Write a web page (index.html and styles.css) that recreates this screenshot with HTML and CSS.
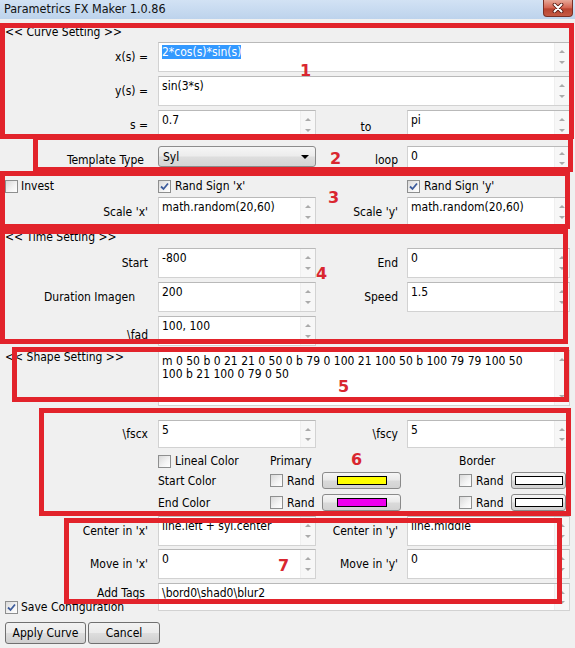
FILE: index.html
```html
<!DOCTYPE html>
<html>
<head>
<meta charset="utf-8">
<title>Parametrics FX Maker 1.0.86</title>
<link rel="stylesheet" href="styles.css">
</head>
<body>
<div class="win">
  <div class="titlebar">
    <span class="title">Parametrics FX Maker 1.0.86</span>
    <div class="close"><svg width="14" height="10" viewBox="0 0 14 10"><path d="M3.5 1.5 L10.5 8.5 M10.5 1.5 L3.5 8.5" stroke="#5a1a12" stroke-width="3.8" stroke-linecap="round"/><path d="M3.5 1.5 L10.5 8.5 M10.5 1.5 L3.5 8.5" stroke="#fff" stroke-width="2" stroke-linecap="round"/></svg></div>
  </div>

  <div class="form">
    <div class="hdr hdr-curve">&lt;&lt; Curve Setting &gt;&gt;</div>

    <div class="row h30 m3">
      <div class="lbl">x(s) =</div>
      <div class="field wide"><div class="txt"><span class="sel">2*cos(s)*sin(s)</span></div><div class="sb"><i class="up"></i><i class="dn"></i></div></div>
    </div>
    <div class="row h30 m4">
      <div class="lbl">y(s) =</div>
      <div class="field wide"><div class="txt">sin(3*s)</div><div class="sb"><i class="up"></i><i class="dn"></i></div></div>
    </div>
    <div class="row h30 m4">
      <div class="lbl">s =</div>
      <div class="field"><div class="txt">0.7</div><div class="sb"><i class="up"></i><i class="dn"></i></div></div>
      <div class="mid-c">to</div>
      <div class="field"><div class="txt">pi</div><div class="sb"><i class="up"></i><i class="dn"></i></div></div>
    </div>

    <div class="row tpl">
      <div class="lbl top tt">Template Type</div>
      <div class="select"><span>Syl</span><span class="arr"></span></div>
      <div class="mlbl top">loop</div>
      <div class="field f24"><div class="txt">0</div><div class="sb"><i class="up"></i><i class="dn"></i></div></div>
    </div>

    <div class="row chkrow">
      <div class="chk inv"><span class="cb"></span><span>Invest</span></div>
      <div class="chk"><span class="cb"><svg width="11" height="11" viewBox="0 0 11 11"><path d="M2 5.5 L4.5 8 L9 2.5" fill="none" stroke="#3d5c9c" stroke-width="1.8"/></svg></span><span>Rand Sign 'x'</span></div>
      <div></div>
      <div class="chk"><span class="cb"><svg width="11" height="11" viewBox="0 0 11 11"><path d="M2 5.5 L4.5 8 L9 2.5" fill="none" stroke="#3d5c9c" stroke-width="1.8"/></svg></span><span>Rand Sign 'y'</span></div>
    </div>
    <div class="row h30 m4">
      <div class="lbl">Scale 'x'</div>
      <div class="field"><div class="txt">math.random(20,60)</div><div class="sb"><i class="up"></i><i class="dn"></i></div></div>
      <div class="mlbl">Scale 'y'</div>
      <div class="field"><div class="txt">math.random(20,60)</div><div class="sb"><i class="up"></i><i class="dn"></i></div></div>
    </div>

    <div class="hdr hdr-time">&lt;&lt; Time Setting &gt;&gt;</div>
    <div class="row h30 m4">
      <div class="lbl">Start</div>
      <div class="field"><div class="txt">-800</div><div class="sb"><i class="up"></i><i class="dn"></i></div></div>
      <div class="mlbl">End</div>
      <div class="field"><div class="txt">0</div><div class="sb"><i class="up"></i><i class="dn"></i></div></div>
    </div>
    <div class="row h30 m4">
      <div class="lbl dur">Duration Imagen</div>
      <div class="field"><div class="txt">200</div><div class="sb"><i class="up"></i><i class="dn"></i></div></div>
      <div class="mlbl">Speed</div>
      <div class="field"><div class="txt">1.5</div><div class="sb"><i class="up"></i><i class="dn"></i></div></div>
    </div>
    <div class="row h30 m4">
      <div class="lbl lowlbl">\fad</div>
      <div class="field"><div class="txt">100, 100</div><div class="sb"><i class="up"></i><i class="dn"></i></div></div>
    </div>

    <div class="row shape m4">
      <div class="hdr shape-hdr">&lt;&lt; Shape Setting &gt;&gt;</div>
      <div class="field wide"><div class="txt multi"><div>m 0 50 b 0 21 21 0 50 0 b 79 0 100 21 100 50 b 100 79 79 100 50</div><div>100 b 21 100 0 79 0 50</div></div><div class="sb"><i class="up"></i><i class="dn"></i></div></div>
    </div>

    <div class="row h28 m14">
      <div class="lbl">\fscx</div>
      <div class="field"><div class="txt">5</div><div class="sb"><i class="up"></i><i class="dn"></i></div></div>
      <div class="mlbl">\fscy</div>
      <div class="field"><div class="txt">5</div><div class="sb"><i class="up"></i><i class="dn"></i></div></div>
    </div>

    <div class="crow lineal">
      <div></div>
      <div class="chk"><span class="cb"></span><span>Lineal Color</span></div>
      <div class="span2">Primary</div>
      <div class="span2">Border</div>
    </div>
    <div class="crow m5">
      <div></div>
      <div>Start Color</div>
      <div class="chk"><span class="cb"></span><span>Rand</span></div>
      <div><div class="cbtn"><span class="sw yellow"></span></div></div>
      <div class="chk"><span class="cb"></span><span>Rand</span></div>
      <div><div class="cbtn small"><span class="sw white"></span></div></div>
    </div>
    <div class="crow m5">
      <div></div>
      <div>End Color</div>
      <div class="chk"><span class="cb"></span><span>Rand</span></div>
      <div><div class="cbtn"><span class="sw magenta"></span></div></div>
      <div class="chk"><span class="cb"></span><span>Rand</span></div>
      <div><div class="cbtn small"><span class="sw white"></span></div></div>
    </div>

    <div class="row h30 m5">
      <div class="lbl">Center in 'x'</div>
      <div class="field"><div class="txt">line.left + syl.center</div><div class="sb"><i class="up"></i><i class="dn"></i></div></div>
      <div class="mlbl">Center in 'y'</div>
      <div class="field"><div class="txt">line.middle</div><div class="sb"><i class="up"></i><i class="dn"></i></div></div>
    </div>
    <div class="row h30 m3">
      <div class="lbl">Move in 'x'</div>
      <div class="field"><div class="txt">0</div><div class="sb"><i class="up"></i><i class="dn"></i></div></div>
      <div class="mlbl">Move in 'y'</div>
      <div class="field"><div class="txt">0</div><div class="sb"><i class="up"></i><i class="dn"></i></div></div>
    </div>
    <div class="row tagrow m4">
      <div class="lbl tags">Add Tags</div>
      <div class="field wide"><div class="txt">\bord0\shad0\blur2</div><div class="sb"><i class="up"></i><i class="dn"></i></div></div>
    </div>

    <div class="chk save"><span class="cb"><svg width="11" height="11" viewBox="0 0 11 11"><path d="M2 5.5 L4.5 8 L9 2.5" fill="none" stroke="#3d5c9c" stroke-width="1.8"/></svg></span><span>Save Configuration</span></div>

    <div class="buttons">
      <button class="btn apply">Apply Curve</button>
      <button class="btn cancel">Cancel</button>
    </div>
  </div>

  <div class="anno">
    <div class="rb b1"></div>
    <div class="rb b2"></div>
    <div class="rb b3"></div>
    <div class="rb b4"></div>
    <div class="rb b5"></div>
    <div class="rb b6"></div>
    <div class="rb b7"></div>
    <span class="num n1">1</span>
    <span class="num n2">2</span>
    <span class="num n3">3</span>
    <span class="num n4">4</span>
    <span class="num n5">5</span>
    <span class="num n6">6</span>
    <span class="num n7">7</span>
  </div>
</div>
</body>
</html>
```

FILE: styles.css
```css
* { box-sizing: border-box; }
html, body { margin: 0; padding: 0; }
body {
  width: 575px;
  height: 648px;
  overflow: hidden;
  background: #f0f0f0;
  font-family: "DejaVu Sans Condensed", "DejaVu Sans", Verdana, sans-serif;
  font-stretch: condensed;
  font-size: 12px;
  line-height: 14px;
  color: #000;
}
.win { position: relative; width: 575px; height: 648px; background: #f0f0f0; }

.titlebar {
  height: 19px;
  display: flex;
  justify-content: space-between;
  align-items: flex-start;
  background: linear-gradient(#d2e2f4, #bdd3ec);
  padding-left: 4px;
}
.title { font-size: 12.5px; line-height: 17px; color: #111; }
.close {
  width: 30px;
  height: 17px;
  margin-right: 2px;
  border: 1px solid #7a2f25;
  border-top: none;
  border-radius: 0 0 4px 4px;
  background: linear-gradient(#e8a898, #d4624f 50%, #b9432f 55%, #c55a44);
  display: flex;
  align-items: center;
  justify-content: center;
}

/* rows */
.row {
  display: grid;
  grid-template-columns: 158px 158px 91px 163px;
  align-items: center;
}
.h30 { height: 30px; }
.h28 { height: 28px; }
.h30 .field { height: 30px; }
.h28 .field { height: 28px; }
.m3 { margin-top: 3px; }
.m4 { margin-top: 4px; }
.m5 { margin-top: 5px; }
.m14 { margin-top: 14px; }

.hdr { padding-left: 5px; height: 13px; line-height: 13px; white-space: nowrap; }
.hdr-curve { margin-top: 7px; }
.hdr-time { margin-top: 4px; }

.lbl { text-align: right; padding-right: 10px; white-space: nowrap; }
.lbl.dur { padding-right: 23px; }
.lbl.tt { padding-right: 14px; }
.lowlbl { padding-top: 8px; }
.mlbl { text-align: right; padding-right: 9px; white-space: nowrap; }
.mid-c { text-align: center; padding-left: 9px; padding-top: 3px; }
.top { align-self: start; padding-top: 7px; }

/* text fields */
.field {
  display: flex;
  background: #fff;
  border: 1px solid #d2d2d2;
  border-top-color: #b9b9b9;
}
.field.wide { grid-column: 2 / 5; }
.txt {
  flex: 1;
  padding: 2px 3px;
  white-space: nowrap;
  overflow: hidden;
}
.sel { background: #3399ff; color: #fff; }
.sb {
  width: 15px;
  flex: none;
  background: #f7f7f7;
  border-left: 1px solid #efefef;
  display: flex;
  flex-direction: column;
  justify-content: space-between;
  padding: 3px 0;
}
.sb i {
  display: flex;
  height: 11px;
  align-items: center;
  justify-content: center;
}
.sb i::before {
  content: "";
  width: 0;
  height: 0;
  border-left: 3px solid transparent;
  border-right: 3px solid transparent;
}
.sb .up::before { border-bottom: 3px solid #aaaaaa; }
.sb .dn::before { border-top: 3px solid #aaaaaa; }

/* template row */
.tpl { margin-top: 6px; height: 24px; align-items: start; }
.f24 { height: 24px; }
.f24 .sb { padding: 1px 0; }
.select {
  height: 21px;
  border: 1px solid #8c8c8c;
  border-radius: 3px;
  background: linear-gradient(#f6f6f6, #ececec 48%, #dedede 52%, #d4d4d4);
  display: flex;
  align-items: center;
  justify-content: space-between;
  padding: 0 6px 0 4px;
}
.arr {
  width: 0;
  height: 0;
  border-left: 4px solid transparent;
  border-right: 4px solid transparent;
  border-top: 4px solid #000;
}

/* checkboxes */
.chk { display: flex; align-items: center; gap: 4px; white-space: nowrap; }
.cb {
  width: 13px;
  height: 13px;
  flex: none;
  border: 1px solid #8e8f8f;
  background: linear-gradient(135deg, #d9d9d9, #f4f4f4 60%, #ffffff);
  display: flex;
  align-items: center;
  justify-content: center;
}
.chkrow { margin-top: 9px; height: 14px; }
.chk.inv { padding-left: 5px; gap: 3px; }
.save { margin-top: -11px; padding-left: 5px; gap: 3px; height: 14px; }

/* shape */
.shape { height: 56px; align-items: stretch; }
.shape-hdr { padding-top: 1px; }
.txt.multi { white-space: nowrap; line-height: 13px; padding-top: 4px; }

/* add tags */
.tagrow { height: 28px; align-items: start; }
.tagrow .field { height: 28px; }
.lbl.tags { padding-right: 13px; padding-top: 3px; }

/* color rows */
.crow {
  display: grid;
  grid-template-columns: 158px 112px 52px 137px 52px 55px;
  align-items: center;
  height: 17px;
}
.crow.lineal { margin-top: 6px; height: 13px; }
.span2 { grid-column: span 2; }
.cbtn {
  width: 79px;
  height: 17px;
  border: 1px solid #8a8a8a;
  border-radius: 3px;
  background: linear-gradient(#f6f6f6, #e9e9e9 48%, #dadada 52%, #d2d2d2);
  display: flex;
  align-items: center;
  justify-content: center;
}
.cbtn.small { width: 55px; }
.sw { width: 50px; height: 9px; border: 1px solid #000; }
.cbtn.small .sw { width: 48px; }
.yellow { background: #ffff00; }
.magenta { background: #ee00ee; }
.white { background: #ffffff; }

/* buttons */
.buttons { display: flex; gap: 2px; padding-left: 5px; margin-top: 8px; }
.btn {
  height: 22px;
  border: 1px solid #707070;
  border-radius: 3px;
  background: linear-gradient(#f2f2f2, #ebebeb 48%, #dddddd 52%, #cfcfcf);
  font-family: inherit;
  font-stretch: condensed;
  font-size: 12px;
  line-height: 14px;
  color: #000;
  padding: 0;
}
.apply { width: 81px; }
.cancel { width: 72px; }

/* red annotations overlay */
.anno { position: absolute; left: 0; top: 0; width: 575px; height: 648px; pointer-events: none; }
.rb { position: absolute; border: 5px solid #e2232b; }
.b1 { left: 0; top: 23px; width: 574px; height: 116px; }
.b2 { left: 33px; top: 135px; width: 540px; height: 37px; }
.b3 { left: 0; top: 171px; width: 570px; height: 58px; }
.b4 { left: 0; top: 229px; width: 568px; height: 115px; }
.b5 { left: 12px; top: 347px; width: 557px; height: 55px; }
.b6 { left: 39px; top: 408px; width: 532px; height: 108px; }
.b7 { left: 64px; top: 518px; width: 498px; height: 86px; }
.num {
  position: absolute;
  font-family: "DejaVu Sans", Verdana, sans-serif;
  font-stretch: normal;
  font-weight: bold;
  font-size: 16px;
  line-height: 16px;
  color: #d9262f;
}
.n1 { left: 300px; top: 63px; }
.n2 { left: 330px; top: 151px; }
.n3 { left: 328px; top: 190px; }
.n4 { left: 316px; top: 266px; }
.n5 { left: 338px; top: 379px; }
.n6 { left: 351px; top: 452px; }
.n7 { left: 278px; top: 558px; }
```
